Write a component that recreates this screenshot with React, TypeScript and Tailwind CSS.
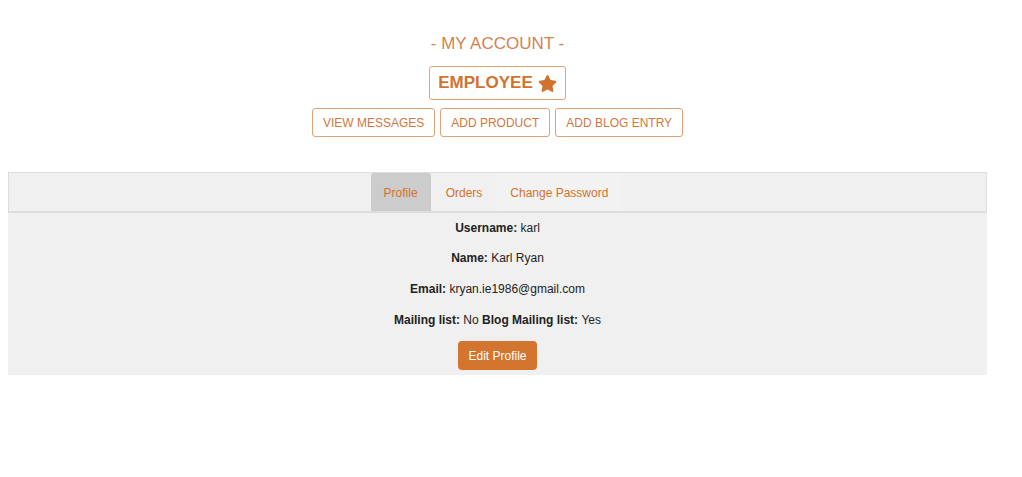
import { FaStar } from "react-icons/fa";

const headerButtons = ["VIEW MESSAGES", "ADD PRODUCT", "ADD BLOG ENTRY"];

export default function App() {
  return (
    <div
      className="min-h-[477px] bg-white"
      style={{ fontFamily: '"Liberation Sans", Arial, sans-serif' }}
    >
      <div className="ml-2 w-[979px] pt-[34px]">
        {/* Header */}
        <div className="flex flex-col items-center">
          <h1 className="h-5 text-[17px] leading-5 text-[#d4814f]">- MY ACCOUNT -</h1>
          <div className="mt-3 flex h-[34px] items-center gap-[5px] rounded-[3px] border border-[#dfa27a] px-[8px] text-[17px] font-bold text-[#d2722f]">
            EMPLOYEE
            <FaStar className="h-[19px] w-[19px] text-[#d2722f]" />
          </div>
          <div className="mt-2 flex gap-[5px]">
            {headerButtons.map((label) => (
              <button
                key={label}
                className="h-[29px] rounded-[3px] border border-[#dfa27a] bg-white px-[10px] text-[12px] text-[#d0783f]"
              >
                {label}
              </button>
            ))}
          </div>
        </div>

        {/* Tabs */}
        <div className="mt-[35px] flex h-[41px] justify-center border border-b-2 border-[#dddddd] bg-[#f0f0f0]">
          <div className="-ml-[3px] flex gap-[2px]">
            <div className="flex items-center rounded-t-[3px] bg-[#cccccc] px-[13px] pt-px text-[12px] text-[#d2722f]">
              Profile
            </div>
            <div className="flex items-center px-[13px] pt-px text-[12px] text-[#d2722f]">
              Orders
            </div>
            <div className="flex items-center bg-[#f2f2f2] px-[13px] pt-px text-[12px] text-[#d2722f]">
              Change Password
            </div>
          </div>
        </div>

        {/* Profile content */}
        <div className="flex flex-col items-center bg-[#f0f0f0] pb-[5px] text-[12px] text-[#222222]">
          <p className="flex h-[29px] items-center">
            <b>Username:</b>&nbsp;karl
          </p>
          <p className="flex h-[31px] items-center">
            <b>Name:</b>&nbsp;Karl Ryan
          </p>
          <p className="flex h-[31px] items-center">
            <b>Email:</b>&nbsp;kryan.ie1986@gmail.com
          </p>
          <p className="flex h-[31px] items-center">
            <b>Mailing list:</b>&nbsp;No&nbsp;<b>Blog Mailing list:</b>&nbsp;Yes
          </p>
          <button className="mt-[6px] h-[29px] rounded-[4px] bg-[#d4752f] px-[10px] text-[12px] text-white">
            Edit Profile
          </button>
        </div>
      </div>
    </div>
  );
}
